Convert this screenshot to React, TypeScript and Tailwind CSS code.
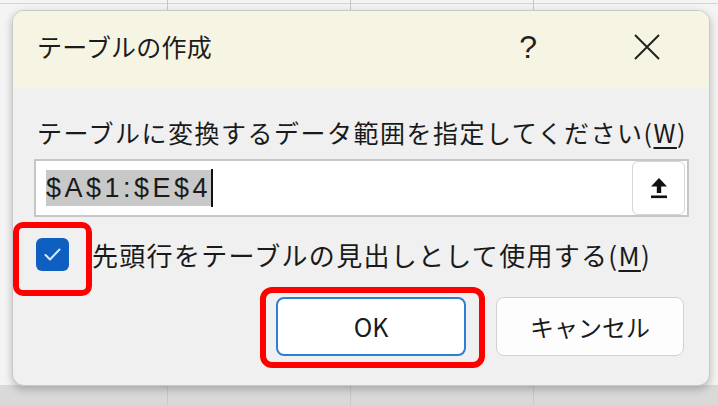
const jp = "font-['Noto_Sans_CJK_JP','Noto_Sans',sans-serif]";

function CheckIcon() {
  return (
    <svg width="33" height="33" viewBox="0 0 33 33" fill="none">
      <path d="M9.5 17 L14 21.5 L23.5 11.5" stroke="#dfe8f6" strokeWidth="2" strokeLinecap="round" strokeLinejoin="round" />
    </svg>
  );
}

function UploadIcon() {
  return (
    <svg width="20" height="24" viewBox="0 0 20 24" fill="#111">
      <path d="M10 2 L18 10.5 L12.2 10.5 L12.2 17 L7.8 17 L7.8 10.5 L2 10.5 Z" />
      <rect x="2" y="19.5" width="16" height="2.6" />
    </svg>
  );
}

function CloseIcon() {
  return (
    <svg width="28" height="28" viewBox="0 0 28 28" fill="none">
      <path d="M2 2 L26 26 M26 2 L2 26" stroke="#222" strokeWidth="2" />
    </svg>
  );
}

export default function App() {
  return (
    <div className={`relative h-[405px] w-[718px] overflow-hidden bg-[#f4f4f4] ${jp}`}>
      {/* sheet grid behind the dialog */}
      <div className="absolute left-0 top-[3px] h-px w-full bg-[#d4d4d4]" />
      <div className="absolute left-0 top-[385px] h-[20px] w-full bg-[#d9d9d9]" />
      <div className="absolute left-[167px] top-0 h-full w-px bg-[#c8c8c8]" />
      <div className="absolute left-[350px] top-0 h-full w-px bg-[#c8c8c8]" />
      <div className="absolute left-[533px] top-0 h-full w-px bg-[#c8c8c8]" />

      <div className="relative pl-[12px] pt-[10px]">
        <div className="flex h-[376px] w-[698px] flex-col overflow-hidden rounded-[12px] border border-[#c9c9c9] bg-[#f0f0f0] shadow-[0_3px_8px_rgba(0,0,0,0.25)]">
          {/* title bar */}
          <div className="flex h-[77px] shrink-0 items-center bg-[#f6f5e4] pb-[6px] pl-[24px]">
            <span className="text-[25px] tracking-[0.2px] text-[#1c1c1c]">テーブルの作成</span>
            <span className="ml-auto mr-[96px] font-['Liberation_Sans',sans-serif] text-[32px] text-[#222]">?</span>
            <span className="mr-[48px]">
              <CloseIcon />
            </span>
          </div>

          {/* body */}
          <div className="flex flex-col pl-[21px] pr-[21px]">
            <div className="mt-[28px] pl-[3px] text-[25px] leading-[32px] tracking-[1.5px] text-[#1a1a1a]">
              テーブルに変換するデータ範囲を指定してください(<span className="underline underline-offset-4">W</span>)
            </div>

            <div className="mt-[11px] flex h-[58px] w-[655px] items-center border-2 border-[#c6c6c6] bg-white pl-[10px] pr-[2px]">
              <span className="bg-[#c8c8c8] font-['Liberation_Sans',sans-serif] text-[27px] leading-[36px] tracking-[3.5px] text-[#1a1a1a]">
                $A$1:$E$4
              </span>
              <span className="h-[38px] w-[2px] bg-[#111]" />
              <div className="ml-auto flex h-[54px] w-[53px] items-center justify-center rounded-[6px] border border-[#d6d6d6] bg-white">
                <UploadIcon />
              </div>
            </div>

            <div className="mt-[21px] flex items-center">
              <div className="ml-[2px] flex h-[33px] w-[33px] items-center justify-center rounded-[6px] bg-[#0f5fc1]">
                <CheckIcon />
              </div>
              <span className="ml-[23px] text-[26px] leading-[32px] tracking-[1.3px] text-[#1a1a1a]">
                先頭行をテーブルの見出しとして使用する(<span className="underline underline-offset-4">M</span>)
              </span>
            </div>

            <div className="mt-[26px] flex justify-end gap-[30px] pr-[4px]">
              <div className="flex h-[59px] w-[190px] items-center justify-center rounded-[8px] border-2 border-[#2d7fd2] bg-white text-[25px] text-[#1a1a1a]">
                OK
              </div>
              <div className="flex h-[59px] w-[188px] items-center justify-center rounded-[8px] border border-[#d2d2d2] bg-[#fdfdfd] text-[24px] text-[#1a1a1a]">
                キャンセル
              </div>
            </div>
          </div>
        </div>
      </div>

      {/* red annotation boxes */}
      <div className="absolute left-[13px] top-[222px] h-[74px] w-[79px] rounded-[10px] border-[6px] border-[#ff0000]" />
      <div className="absolute left-[260px] top-[287px] h-[81px] w-[225px] rounded-[12px] border-[6px] border-[#ff0000]" />
    </div>
  );
}
